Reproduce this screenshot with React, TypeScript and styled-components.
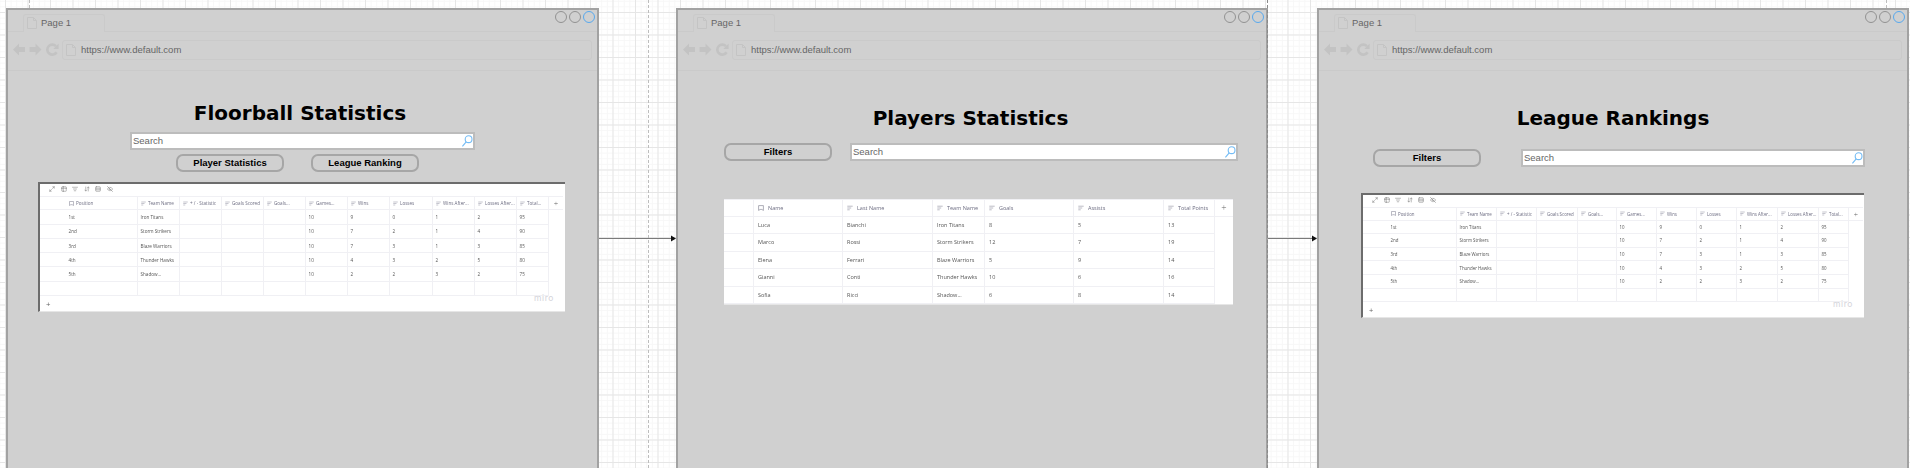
import React from 'react';
import styled, { createGlobalStyle } from 'styled-components';
import { ArrowDownUp, EyeOff, ListFilter, Maximize2, Rows3, Table2 } from 'lucide-react';

const GlobalStyle = createGlobalStyle`
  html, body {
    margin: 0;
    padding: 0;
    width: 1910px;
    height: 468px;
    overflow: hidden;
    background: #fff;
  }
  * { box-sizing: border-box; }
`;

const Board = styled.div`
  position: relative;
  z-index: 0;
  display: flex;
  align-items: flex-start;
  width: 1910px;
  height: 468px;
  padding: 8px 0 0 6px;
  overflow: hidden;
  background-color: #fff;
  background-image:
    linear-gradient(to right, #e6e6e6 1px, transparent 1px),
    linear-gradient(to bottom, #e6e6e6 1px, transparent 1px),
    linear-gradient(to right, #f7f7f7 1px, transparent 1px),
    linear-gradient(to bottom, #f7f7f7 1px, transparent 1px);
  background-size: 22.5px 22.5px, 22.5px 22.5px, 5.625px 5.625px, 5.625px 5.625px;
  background-position: 5px 12px, 5px 12px, 5px 12px, 5px 12px;
`;

const Guide = styled.div<{ $x: number; $front?: boolean }>`
  position: absolute;
  top: 0;
  bottom: 0;
  left: ${p => p.$x}px;
  width: 0;
  border-left: 1px dashed ${p => (p.$front ? '#8a8a8a' : '#bdbdbd')};
  z-index: ${p => (p.$front ? 1 : -1)};
`;

const Connector = styled.div<{ $width: number }>`
  flex: 0 0 ${p => p.$width}px;
  height: 12px;
  margin-top: 224px;
  display: flex;
`;

const Window = styled.section<{ $width: number }>`
  flex: 0 0 ${p => p.$width}px;
  height: 470px;
  display: flex;
  flex-direction: column;
  background: #d0d0d0;
  border: 2px solid #a2a2a2;
  border-bottom: 0;
`;

const TabStrip = styled.div`
  height: 22px;
  flex: none;
  padding: 1px 2px 0 15px;
  display: flex;
  justify-content: space-between;
  align-items: flex-start;
  border-bottom: 1px solid #cacaca;
`;

const Tab = styled.div`
  width: 82px;
  height: 18px;
  margin-top: 3px;
  display: flex;
  align-items: center;
  gap: 4px;
  padding: 0 0 2px 3px;
  background: #d0d0d0;
  border: 1px solid #cacaca;
  border-bottom: 0;
  border-radius: 3px 3px 0 0;
  font: 9.5px 'Liberation Sans', Arial, sans-serif;
  color: #666;
`;

const Controls = styled.div`
  display: flex;
  gap: 2px;
`;

const Dot = styled.span<{ $active?: boolean }>`
  width: 12px;
  height: 12px;
  border-radius: 50%;
  border: 1px solid ${p => (p.$active ? '#58a9ee' : '#929292')};
`;

const NavBar = styled.div`
  height: 39px;
  flex: none;
  display: flex;
  align-items: center;
  padding: 0 5px 3px;
  border-bottom: 1px solid #cacaca;
`;

const NavButtons = styled.div`
  display: flex;
  align-items: center;
  gap: 4px;
  width: 49px;
  flex: none;
`;

const AddressBar = styled.div`
  flex: 1;
  height: 20px;
  display: flex;
  align-items: center;
  gap: 5px;
  padding-left: 3px;
  border: 1px solid #cacaca;
  border-radius: 3px;
  font: 9.5px 'Liberation Sans', Arial, sans-serif;
  color: #666;
`;

const Content = styled.div`
  display: flex;
  flex-direction: column;
`;

const Title = styled.h1<{ $top: number; $nudge?: number }>`
  margin: ${p => p.$top}px 0 0;
  padding-right: ${p => p.$nudge ?? 0}px;
  height: 28px;
  text-align: center;
  font: bold 20px/28px 'DejaVu Sans', Verdana, sans-serif;
  color: #000;
`;

const SearchBox = styled.div<{ $width: number }>`
  position: relative;
  width: ${p => p.$width}px;
  height: 18px;
  flex: none;
  padding-left: 1px;
  background: #fff;
  border: 2px solid #bcbcbc;
  font: 9.5px/13px 'Liberation Sans', Arial, sans-serif;
  color: #666;
`;

const SearchIcon = styled.svg`
  position: absolute;
  right: 0;
  top: 1px;
`;

const ActionButton = styled.div`
  width: 108px;
  height: 18px;
  flex: none;
  display: flex;
  align-items: center;
  justify-content: center;
  padding-bottom: 1px;
  border: 2px solid #a6a6a6;
  border-radius: 7px;
  font: bold 9.5px 'Liberation Sans', Arial, sans-serif;
  color: #000;
`;

const CenterSearch = styled.div`
  display: flex;
  justify-content: center;
  margin-top: 5px;
`;

const ButtonRow = styled.div`
  display: flex;
  justify-content: center;
  gap: 27px;
  margin-top: 4px;
  padding-right: 10px;
`;

const FilterRow = styled.div<{ $top: number; $left: number; $gap: number }>`
  display: flex;
  margin-top: ${p => p.$top}px;
  padding-left: ${p => p.$left}px;
  gap: ${p => p.$gap}px;
`;

const Sheet = styled.div<{ $left: number; $top: number; $width: number; $framed?: boolean; $font: number }>`
  position: relative;
  width: ${p => p.$width}px;
  margin: ${p => p.$top}px 0 0 ${p => p.$left}px;
  background: #fff;
  font-family: 'Open Sans', 'Noto Sans', sans-serif;
  font-size: ${p => p.$font}px;
  color: #555;
  border-bottom: 1px solid #e6e6e6;
  ${p => (p.$framed ? 'border-top: 2px solid #6c6c6c; border-left: 2px solid #6c6c6c;' : '')}
`;

const SheetInner = styled.div`
  filter: blur(0.35px);
`;

const SheetTools = styled.div<{ $height: number; $pad: number }>`
  height: ${p => p.$height}px;
  display: flex;
  align-items: center;
  gap: 5.6px;
  padding: 0 0 2px ${p => p.$pad}px;
  color: #777;
`;

const SheetGrid = styled.div<{ $cols: string; $row: number; $inset: number }>`
  display: grid;
  grid-template-columns: ${p => p.$cols};
  grid-auto-rows: ${p => p.$row}px;
  margin-right: ${p => p.$inset}px;
`;

const Cell = styled.div<{ $head?: boolean; $noRule?: boolean; $pad: number; $plain?: boolean }>`
  display: flex;
  align-items: center;
  gap: ${p => p.$pad}px;
  padding-left: ${p => p.$pad}px;
  overflow: hidden;
  white-space: nowrap;
  color: ${p => (p.$head ? '#6d6d82' : '#555')};
  border-top: ${p => (p.$head ? '1px solid #f0f0f4' : '0')};
  border-right: ${p => (p.$plain ? '0' : '1px solid #f0f0f4')};
  border-bottom: ${p => (p.$noRule ? '0' : '1px solid #f0f0f4')};
`;

const PlusCell = styled(Cell)`
  justify-content: center;
  padding-left: 0;
  color: #666;
  font-size: 1.7em;
  font-weight: 300;
`;

const SheetFooter = styled.div<{ $height: number; $pad: number }>`
  height: ${p => p.$height}px;
  display: flex;
  align-items: center;
  padding-left: ${p => p.$pad}px;
  color: #666;
  font-size: 1.7em;
`;

const Watermark = styled.span`
  position: absolute;
  right: 11px;
  bottom: 8px;
  font: 8.5px 'Inter', sans-serif;
  letter-spacing: 0.6px;
  color: #d4d4da;
`;

const DocIcon = () => (
  <svg width="10" height="12" viewBox="0 0 10 12" fill="none" stroke="#c4c4c4" strokeWidth="1">
    <path d="M0.5 0.5H6.5L9.5 3.5V11.5H0.5Z" />
    <path d="M6.5 0.5V3.5H9.5" />
  </svg>
);

const BackIcon = () => (
  <svg width="12" height="13" viewBox="0 0 12 13" fill="#c3c3c3">
    <path d="M0 6.5L6 0.5V4H12V9H6V12.5Z" />
  </svg>
);

const ForwardIcon = () => (
  <svg width="13" height="13" viewBox="0 0 12 13" fill="#c3c3c3">
    <path d="M12 6.5L6 0.5V4H0V9H6V12.5Z" />
  </svg>
);

const ReloadIcon = () => (
  <svg width="13" height="13" viewBox="0 0 13 13" fill="none" stroke="#c3c3c3" strokeWidth="2.6">
    <path d="M10.6 9.2A5 5 0 1 1 10 3.2" />
    <path d="M12.6 0.4V6H7.4Z" fill="#c3c3c3" stroke="none" />
  </svg>
);

const MagnifierIcon = () => (
  <SearchIcon width="12" height="12" viewBox="0 0 12 12" fill="none" stroke="#74bcf5" strokeWidth="1.1">
    <circle cx="7.6" cy="4.2" r="3.4" />
    <path d="M5.2 6.8L1.4 11.4" />
  </SearchIcon>
);

const TextTypeIcon = ({ size }: { size: number }) => (
  <svg width={size} height={size} viewBox="0 0 10 10" fill="none" stroke="#8d8d9e" strokeWidth="1">
    <path d="M0.5 2H9.5M0.5 5H7M0.5 8H4.5" />
  </svg>
);

const TitleTypeIcon = ({ size }: { size: number }) => (
  <svg width={size} height={size} viewBox="0 0 10 10" fill="none" stroke="#777788" strokeWidth="1">
    <path d="M1 1H9V9L6.4 7.4H3.6L1 9Z" />
  </svg>
);

const SheetToolbar = ({ height, pad }: { height: number; pad: number }) => (
  <SheetTools $height={height} $pad={pad}>
    <Maximize2 size={6} />
    <Table2 size={6} />
    <ListFilter size={6} />
    <ArrowDownUp size={6} />
    <Rows3 size={6} />
    <EyeOff size={6} />
  </SheetTools>
);

type SheetSpec = {
  left: number;
  top: number;
  width: number;
  font: number;
  row: number;
  inset: number;
  icon: number;
  pad: number;
  widths: number[];
  head: string[];
  rows: string[][];
  toolbar?: number;
  toolPad?: number;
  footer?: number;
  footerPad?: number;
  framed?: boolean;
  gutterRule?: boolean;
};

const DataSheet = ({ spec }: { spec: SheetSpec }) => {
  const cols = spec.widths.map(w => `${w}px`).join(' ');
  return (
    <Sheet $left={spec.left} $top={spec.top} $width={spec.width} $framed={spec.framed} $font={spec.font}>
      <SheetInner>
        {spec.toolbar && <SheetToolbar height={spec.toolbar} pad={spec.toolPad ?? 10} />}
        <SheetGrid $cols={cols} $row={spec.row} $inset={spec.inset}>
          <Cell $head $pad={spec.pad} $plain={!spec.gutterRule} />
          {spec.head.map((label, i) => (
            <Cell $head $pad={spec.pad} key={label}>
              {i === 0 ? <TitleTypeIcon size={spec.icon} /> : <TextTypeIcon size={spec.icon} />}
              <span>{label}</span>
            </Cell>
          ))}
          <PlusCell $head $pad={spec.pad} $plain>+</PlusCell>
          {spec.rows.map((row, r) => (
            <React.Fragment key={r}>
              <Cell $pad={spec.pad} $plain={!spec.gutterRule} />
              {row.map((value, c) => (
                <Cell $pad={spec.pad} key={c}>{value}</Cell>
              ))}
              <Cell $pad={spec.pad} $noRule $plain />
            </React.Fragment>
          ))}
        </SheetGrid>
        {spec.footer && <SheetFooter $height={spec.footer} $pad={spec.footerPad ?? 6}>+</SheetFooter>}
      </SheetInner>
      {spec.footer && <Watermark>miro</Watermark>}
    </Sheet>
  );
};

const leagueHead = [
  'Position', 'Team Name', '+ / - Statistic', 'Goals Scored', 'Goals...', 'Games...',
  'Wins', 'Losses', 'Wins After...', 'Losses After...', 'Total...',
];

const blank = ['', '', '', '', '', '', '', '', '', '', ''];

const leagueRows = [
  ['1st', 'Iron Titans', '', '', '', '10', '9', '0', '1', '2', '95'],
  ['2nd', 'Storm Strikers', '', '', '', '10', '7', '2', '1', '4', '90'],
  ['3rd', 'Blaze Warriors', '', '', '', '10', '7', '3', '1', '3', '85'],
  ['4th', 'Thunder Hawks', '', '', '', '10', '4', '3', '2', '5', '80'],
  ['5th', 'Shadow...', '', '', '', '10', '2', '2', '3', '2', '75'],
  blank,
];

const floorballSheet: SheetSpec = {
  left: 30,
  top: 10,
  width: 527,
  font: 4.6,
  row: 14.3,
  inset: 2,
  icon: 5,
  pad: 2.5,
  widths: [26, 72, 42, 42, 42, 42, 42, 42, 43, 42, 42, 32, 14],
  head: leagueHead,
  rows: leagueRows,
  toolbar: 12,
  toolPad: 9,
  footer: 15,
  footerPad: 6,
  framed: true,
};

const rankingSheet: SheetSpec = {
  left: 42,
  top: 26,
  width: 503,
  font: 4.4,
  row: 13.6,
  inset: 1,
  icon: 5,
  pad: 2.5,
  widths: [25, 69, 40, 40, 41, 39, 40, 40, 40, 41, 41, 30, 14],
  head: leagueHead,
  rows: leagueRows,
  toolbar: 12,
  toolPad: 9,
  footer: 15,
  footerPad: 6,
  framed: true,
};

const playersSheet: SheetSpec = {
  left: 46,
  top: 38,
  width: 509,
  font: 5.5,
  row: 17.5,
  inset: 0,
  icon: 6,
  pad: 4,
  gutterRule: true,
  widths: [30, 89, 90, 52, 89, 90, 51, 18],
  head: ['Name', 'Last Name', 'Team Name', 'Goals', 'Assists', 'Total Points'],
  rows: [
    ['Luca', 'Bianchi', 'Iron Titans', '8', '5', '13'],
    ['Marco', 'Rossi', 'Storm Strikers', '12', '7', '19'],
    ['Elena', 'Ferrari', 'Blaze Warriors', '5', '9', '14'],
    ['Gianni', 'Conti', 'Thunder Hawks', '10', '6', '16'],
    ['Sofia', 'Ricci', 'Shadow...', '6', '8', '14'],
  ],
};

const BrowserChrome = () => (
  <>
    <TabStrip>
      <Tab>
        <DocIcon />
        Page 1
      </Tab>
      <Controls>
        <Dot />
        <Dot />
        <Dot $active />
      </Controls>
    </TabStrip>
    <NavBar>
      <NavButtons>
        <BackIcon />
        <ForwardIcon />
        <ReloadIcon />
      </NavButtons>
      <AddressBar>
        <DocIcon />
        https://www.default.com
      </AddressBar>
    </NavBar>
  </>
);

const Search = ({ width }: { width: number }) => (
  <SearchBox $width={width}>
    Search
    <MagnifierIcon />
  </SearchBox>
);

const Arrow = ({ width }: { width: number }) => (
  <Connector $width={width}>
    <svg width={width} height="12" viewBox={`0 0 ${width} 12`}>
      <path d={`M0 6.5H${width - 4}`} stroke="#7a7a7a" strokeWidth="1.2" />
      <path d={`M${width - 5} 3.5L${width} 6.5L${width - 5} 9.5Z`} fill="#111" />
    </svg>
  </Connector>
);

const App: React.FC = () => {
  return (
    <>
      <GlobalStyle />
      <Board>
        <Guide $x={29} />
        <Guide $x={648} />
        <Guide $x={1267} $front />
        <Guide $x={1886} />

        <Window $width={593}>
          <BrowserChrome />
          <Content>
            <Title $top={28} $nudge={5}>Floorball Statistics</Title>
            <CenterSearch>
              <Search width={345} />
            </CenterSearch>
            <ButtonRow>
              <ActionButton>Player Statistics</ActionButton>
              <ActionButton>League Ranking</ActionButton>
            </ButtonRow>
            <DataSheet spec={floorballSheet} />
          </Content>
        </Window>

        <Arrow width={77} />

        <Window $width={592}>
          <BrowserChrome />
          <Content>
            <Title $top={33} $nudge={3}>Players Statistics</Title>
            <FilterRow $top={11} $left={46} $gap={18}>
              <ActionButton>Filters</ActionButton>
              <Search width={388} />
            </FilterRow>
            <DataSheet spec={playersSheet} />
          </Content>
        </Window>

        <Arrow width={49} />

        <Window $width={592}>
          <BrowserChrome />
          <Content>
            <Title $top={33}>League Rankings</Title>
            <FilterRow $top={17} $left={54} $gap={40}>
              <ActionButton>Filters</ActionButton>
              <Search width={344} />
            </FilterRow>
            <DataSheet spec={rankingSheet} />
          </Content>
        </Window>
      </Board>
    </>
  );
};

export default App;
